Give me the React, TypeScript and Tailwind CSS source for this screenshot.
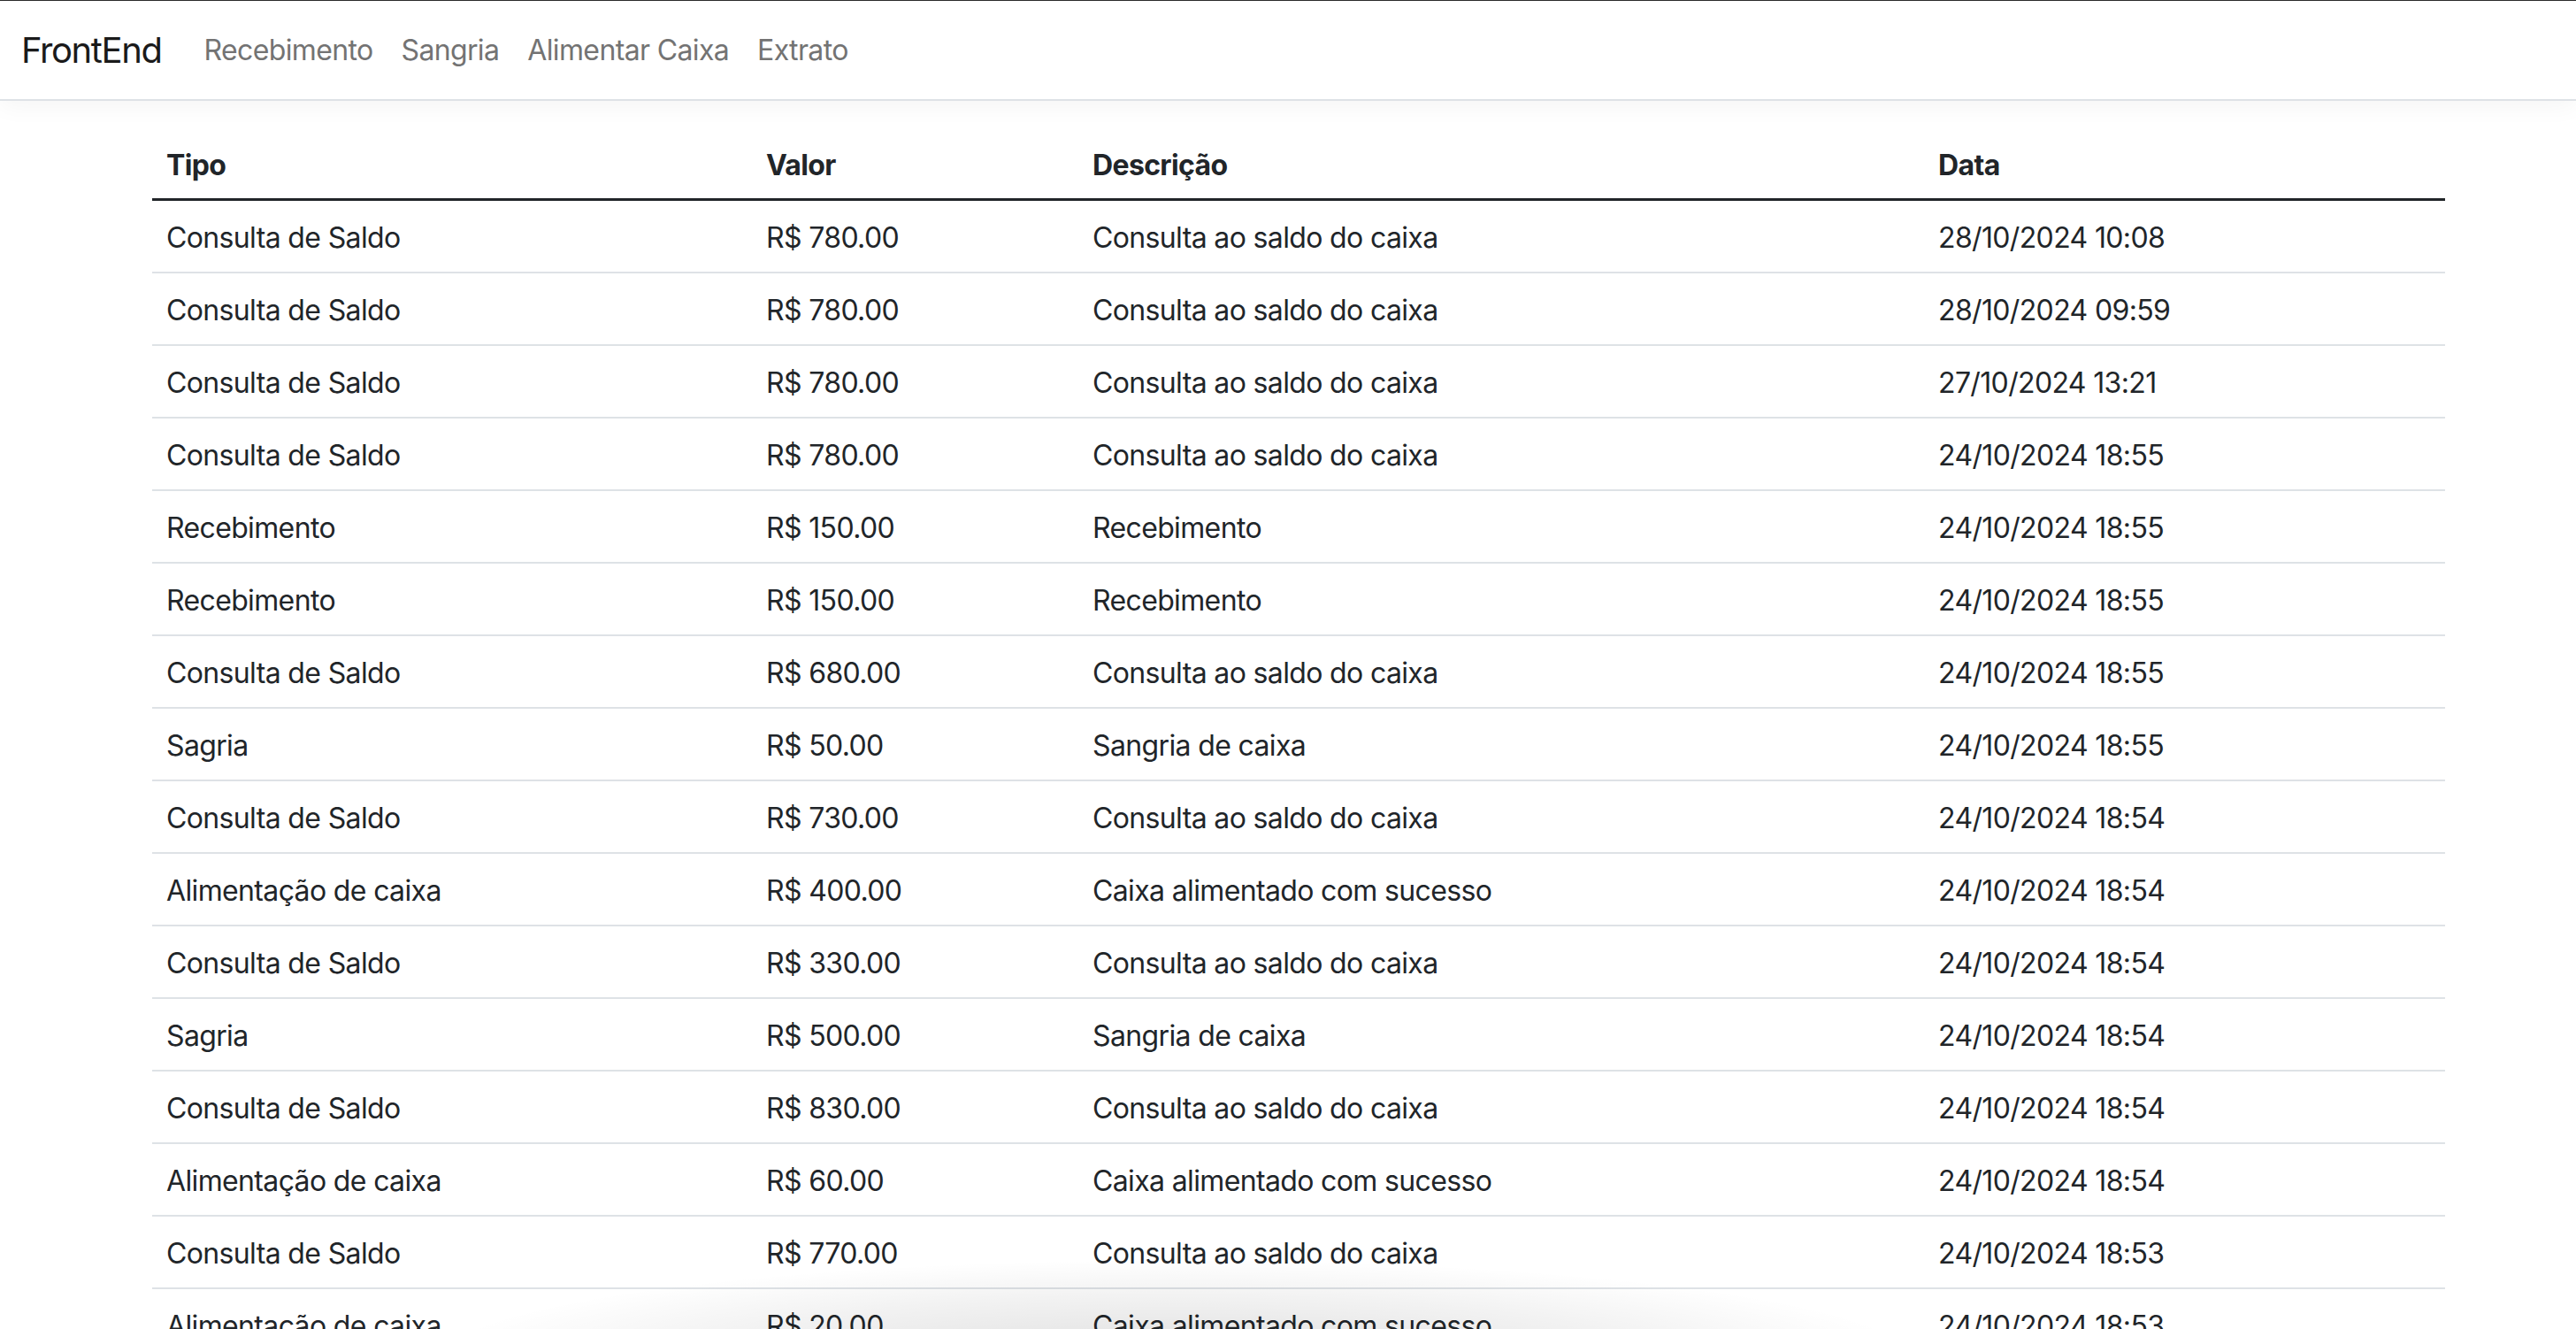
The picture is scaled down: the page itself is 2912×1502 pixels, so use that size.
import React from "react"

type Lancamento = {
  tipo: string
  valor: string
  descricao: string
  data: string
}

const saldo = "Consulta ao saldo do caixa"
const alimentado = "Caixa alimentado com sucesso"

const lancamentos: Lancamento[] = [
  { tipo: "Consulta de Saldo", valor: "R$ 780.00", descricao: saldo, data: "28/10/2024 10:08" },
  { tipo: "Consulta de Saldo", valor: "R$ 780.00", descricao: saldo, data: "28/10/2024 09:59" },
  { tipo: "Consulta de Saldo", valor: "R$ 780.00", descricao: saldo, data: "27/10/2024 13:21" },
  { tipo: "Consulta de Saldo", valor: "R$ 780.00", descricao: saldo, data: "24/10/2024 18:55" },
  { tipo: "Recebimento", valor: "R$ 150.00", descricao: "Recebimento", data: "24/10/2024 18:55" },
  { tipo: "Recebimento", valor: "R$ 150.00", descricao: "Recebimento", data: "24/10/2024 18:55" },
  { tipo: "Consulta de Saldo", valor: "R$ 680.00", descricao: saldo, data: "24/10/2024 18:55" },
  { tipo: "Sagria", valor: "R$ 50.00", descricao: "Sangria de caixa", data: "24/10/2024 18:55" },
  { tipo: "Consulta de Saldo", valor: "R$ 730.00", descricao: saldo, data: "24/10/2024 18:54" },
  { tipo: "Alimentação de caixa", valor: "R$ 400.00", descricao: alimentado, data: "24/10/2024 18:54" },
  { tipo: "Consulta de Saldo", valor: "R$ 330.00", descricao: saldo, data: "24/10/2024 18:54" },
  { tipo: "Sagria", valor: "R$ 500.00", descricao: "Sangria de caixa", data: "24/10/2024 18:54" },
  { tipo: "Consulta de Saldo", valor: "R$ 830.00", descricao: saldo, data: "24/10/2024 18:54" },
  { tipo: "Alimentação de caixa", valor: "R$ 60.00", descricao: alimentado, data: "24/10/2024 18:54" },
  { tipo: "Consulta de Saldo", valor: "R$ 770.00", descricao: saldo, data: "24/10/2024 18:53" },
  { tipo: "Alimentação de caixa", valor: "R$ 20.00", descricao: alimentado, data: "24/10/2024 18:53" },
]

const links = ["Recebimento", "Sangria", "Alimentar Caixa", "Extrato"]

function Navbar() {
  return (
    <nav className="relative z-10 h-[114px] border-t border-[#2b2b2b] border-b-2 border-b-[#dee2e6] bg-white shadow-[0_6px_26px_rgba(0,0,0,0.045)]">
      <div className="flex items-center h-full px-[24px]">
        <a className="text-[40px] leading-[60px] tracking-[-0.035em] text-[#1a1a1a] mr-[32px]">FrontEnd</a>
        <ul className="flex items-center">
          {links.map((link) => (
            <li key={link}>
              <a className="block px-[16px] text-[32px] leading-[48px] tracking-[-0.02em] text-[#737373]">{link}</a>
            </li>
          ))}
        </ul>
      </div>
    </nav>
  )
}

export default function App() {
  return (
    <div
      className="relative h-[1502px] overflow-hidden bg-white text-[#212529]"
      style={{ fontFamily: "Inter, 'Noto Sans', sans-serif" }}
    >
      <Navbar />

      {/* Extrato table */}
      <main className="pt-[30px] pl-[172px]">
        <table className="w-[2592px] table-fixed border-collapse text-left text-[32px] leading-[48px] tracking-[-0.02em]">
          <colgroup>
            <col className="w-[678px]" />
            <col className="w-[369px]" />
            <col className="w-[956px]" />
            <col className="w-[589px]" />
          </colgroup>
          <thead>
            <tr className="border-b-[3px] border-[#212529]">
              <th className="px-[16px] pt-[19px] pb-[13px] font-bold">Tipo</th>
              <th className="px-[16px] pt-[19px] pb-[13px] font-bold">Valor</th>
              <th className="px-[16px] pt-[19px] pb-[13px] font-bold">Descrição</th>
              <th className="px-[16px] pt-[19px] pb-[13px] font-bold">Data</th>
            </tr>
          </thead>
          <tbody>
            {lancamentos.map((l, i) => (
              <tr key={i} className="border-b-2 border-[#dee2e6]">
                <td className="px-[16px] pt-[18px] pb-[14px]">{l.tipo}</td>
                <td className="px-[16px] pt-[18px] pb-[14px]">{l.valor}</td>
                <td className="px-[16px] pt-[18px] pb-[14px]">{l.descricao}</td>
                <td className="px-[16px] pt-[18px] pb-[14px]">{l.data}</td>
              </tr>
            ))}
          </tbody>
        </table>
      </main>

      {/* soft shadow of something floating over the bottom edge */}
      <div className="pointer-events-none absolute left-[480px] bottom-[-150px] w-[1700px] h-[230px] rounded-[50%] bg-[radial-gradient(ellipse_at_center,rgba(0,0,0,0.13),rgba(0,0,0,0.05)_45%,rgba(0,0,0,0)_70%)]" />
    </div>
  )
}
